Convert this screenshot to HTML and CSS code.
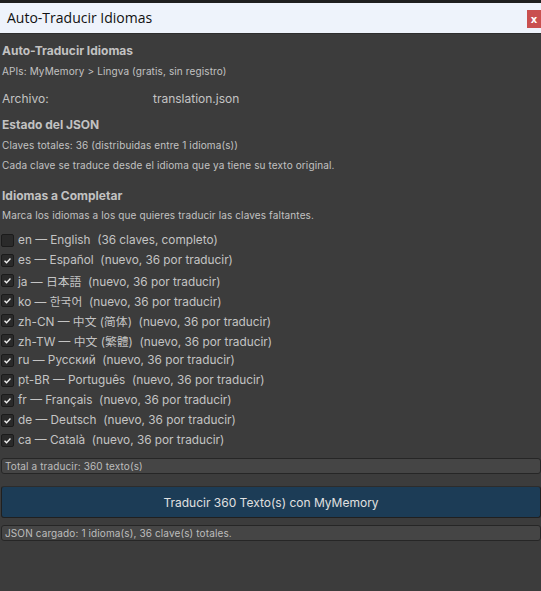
FILE: index.html
```html
<!DOCTYPE html>
<html lang="es">
<head>
<meta charset="utf-8">
<title>Auto-Traducir Idiomas</title>
<link rel="stylesheet" href="styles.css">
</head>
<body>
<div class="window">
  <div class="titlebar">
    <span class="title">Auto-Traducir Idiomas</span>
    <span class="close">x</span>
  </div>
  <div class="content">
    <div class="h1">Auto-Traducir Idiomas</div>
    <div class="small">APIs: MyMemory &gt; Lingva (gratis, sin registro)</div>
    <div class="field-row"><span class="label">Archivo:</span><span class="value">translation.json</span></div>
    <div class="h1 sec2">Estado del JSON</div>
    <div class="small">Claves totales: 36 (distribuidas entre 1 idioma(s))</div>
    <div class="small">Cada clave se traduce desde el idioma que ya tiene su texto original.</div>
    <div class="h1 sec3">Idiomas a Completar</div>
    <div class="small marca">Marca los idiomas a los que quieres traducir las claves faltantes.</div>
    <div class="list">
      <div class="row"><span class="cb"></span><span>en — English&nbsp; (36 claves, completo)</span></div>
      <div class="row"><span class="cb on"><svg viewBox="0 0 13 13"><path d="M3 6.8 L5.4 9.1 L10 4.2"/></svg></span><span>es — Español&nbsp; (nuevo, 36 por traducir)</span></div>
      <div class="row"><span class="cb on"><svg viewBox="0 0 13 13"><path d="M3 6.8 L5.4 9.1 L10 4.2"/></svg></span><span>ja — 日本語&nbsp; (nuevo, 36 por traducir)</span></div>
      <div class="row"><span class="cb on"><svg viewBox="0 0 13 13"><path d="M3 6.8 L5.4 9.1 L10 4.2"/></svg></span><span>ko — 한국어&nbsp; (nuevo, 36 por traducir)</span></div>
      <div class="row"><span class="cb on"><svg viewBox="0 0 13 13"><path d="M3 6.8 L5.4 9.1 L10 4.2"/></svg></span><span>zh-CN — 中文 (简体)&nbsp; (nuevo, 36 por traducir)</span></div>
      <div class="row"><span class="cb on"><svg viewBox="0 0 13 13"><path d="M3 6.8 L5.4 9.1 L10 4.2"/></svg></span><span>zh-TW — 中文 (繁體)&nbsp; (nuevo, 36 por traducir)</span></div>
      <div class="row"><span class="cb on"><svg viewBox="0 0 13 13"><path d="M3 6.8 L5.4 9.1 L10 4.2"/></svg></span><span>ru — Русский&nbsp; (nuevo, 36 por traducir)</span></div>
      <div class="row"><span class="cb on"><svg viewBox="0 0 13 13"><path d="M3 6.8 L5.4 9.1 L10 4.2"/></svg></span><span>pt-BR — Português&nbsp; (nuevo, 36 por traducir)</span></div>
      <div class="row"><span class="cb on"><svg viewBox="0 0 13 13"><path d="M3 6.8 L5.4 9.1 L10 4.2"/></svg></span><span>fr — Français&nbsp; (nuevo, 36 por traducir)</span></div>
      <div class="row"><span class="cb on"><svg viewBox="0 0 13 13"><path d="M3 6.8 L5.4 9.1 L10 4.2"/></svg></span><span>de — Deutsch&nbsp; (nuevo, 36 por traducir)</span></div>
      <div class="row"><span class="cb on"><svg viewBox="0 0 13 13"><path d="M3 6.8 L5.4 9.1 L10 4.2"/></svg></span><span>ca — Català&nbsp; (nuevo, 36 por traducir)</span></div>
    </div>
    <div class="box total">Total a traducir: 360 texto(s)</div>
    <div class="button">Traducir 360 Texto(s) con MyMemory</div>
    <div class="box status">JSON cargado: 1 idioma(s), 36 clave(s) totales.</div>
  </div>
</div>
</body>
</html>
```
FILE: styles.css
```css
html, body {
  margin: 0;
  padding: 0;
  background: #3c3c3c;
}
body {
  font-family: Inter, "Noto Sans", "Noto Sans CJK JP", "Noto Sans CJK KR", sans-serif;
  color: #c4c4c4;
  width: 541px;
  height: 591px;
  overflow: hidden;
}
.window {
  display: flex;
  flex-direction: column;
}
.titlebar {
  border-top: 3px solid #1f1f1f;
  height: 30px;
  background: #eef3fb;
  display: flex;
  align-items: center;
  justify-content: space-between;
  border-bottom: 1px solid #2e2e2e;
}
.title {
  font-family: "Open Sans", "Noto Sans", sans-serif;
  font-size: 14px;
  color: #111;
  margin-left: 7px;
  margin-top: -1px;
}
.close {
  width: 14px;
  height: 18px;
  margin-top: 2px;
  background: #c9504f;
  color: #fff;
  font-family: "DejaVu Sans", sans-serif;
  font-weight: bold;
  font-size: 10px;
  display: flex;
  align-items: center;
  justify-content: center;
}
.content {
  padding: 7px 0 0 2px;
  display: flex;
  flex-direction: column;
}
.h1 {
  font-weight: 700;
  font-size: 12px;
  line-height: 20px;
  color: #c2c2c2;
}
.small {
  font-size: 10px;
  line-height: 20px;
  letter-spacing: 0.12px;
  color: #c2c2c2;
}
.field-row {
  display: flex;
  font-size: 12px;
  line-height: 20px;
  margin-top: 8px;
}
.label {
  width: 151px;
  color: #c4c4c4;
}
.value {
  color: #c4c4c4;
}
.sec2 {
  margin-top: 6px;
}
.sec3 {
  margin-top: 11px;
}
.marca {
  line-height: 18px;
}
.list {
  margin-top: 6px;
  margin-left: -1px;
  display: flex;
  flex-direction: column;
}
.row {
  display: flex;
  align-items: center;
  height: 20px;
  font-size: 11.8px;
  color: #c4c4c4;
  gap: 4px;
}
.cb {
  width: 11px;
  height: 11px;
  border: 1px solid #1b1b1b;
  border-radius: 2px;
  background: #2a2a2a;
  display: flex;
  flex: none;
}
.cb svg {
  width: 11px;
  height: 11px;
}
.cb path {
  fill: none;
  stroke: #f0f0f0;
  stroke-width: 1.6;
}
.box {
  margin-left: -1px;
  height: 14px;
  border: 1px solid #262626;
  border-radius: 3px;
  background: #454545;
  font-size: 10px;
  letter-spacing: 0.12px;
  line-height: 14px;
  padding-left: 3px;
  color: #bdbdbd;
}
.total {
  margin-top: 8px;
}
.button {
  margin-top: 12px;
  margin-left: -1px;
  height: 30px;
  border: 1px solid #202020;
  border-top-color: #2c2c2c;
  border-radius: 3px;
  background: #1c3c56;
  color: #e0e0e0;
  font-size: 12px;
  display: flex;
  align-items: center;
  justify-content: center;
}
.status {
  margin-top: 7px;
}
```
